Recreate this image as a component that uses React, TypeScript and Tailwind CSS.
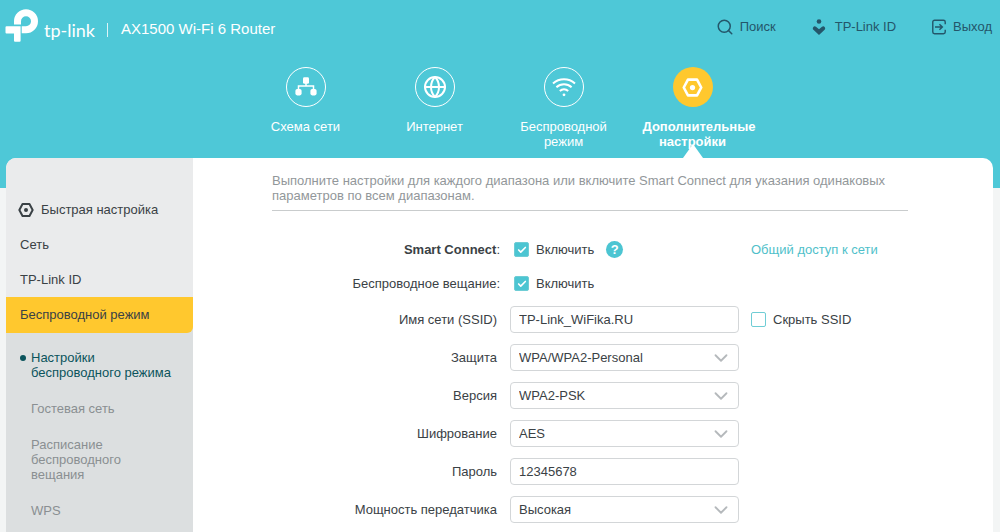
import type { ReactNode } from 'react'
import { Check, ChevronDown, Globe, Search } from 'lucide-react'

function Logo() {
  return (
    <svg className="mb-2 h-[34px] w-[34px] shrink-0" viewBox="0 0 34 34" fill="none" aria-hidden="true">
      <path d="M12.500 15.600V12.300a8.500 8.500 0 1 1 8.500 8.500h-4.300" stroke="white" strokeWidth="7" />
      <path d="M1.500 17.300H15.600V31.800a1 1 0 0 1-1 1H10a1 1 0 0 1-1-1V24.500H1.500a1 1 0 0 1-1-1V18.300a1 1 0 0 1 1-1z" fill="white" />
    </svg>
  )
}

function TopologyIcon() {
  return (
    <svg className="h-6 w-6" viewBox="0 0 24 24" fill="none" aria-hidden="true">
      <rect x="9" y="2.2" width="6" height="6.6" rx="1.4" fill="currentColor" />
      <rect x="1.4" y="14" width="6.2" height="6.4" rx="1.8" fill="currentColor" />
      <rect x="16.4" y="14" width="6.2" height="6.4" rx="1.8" fill="currentColor" />
      <path d="M12 8v3M4.500 15v-4h15v4" stroke="currentColor" strokeWidth="1.5" />
    </svg>
  )
}

function WifiIcon() {
  return (
    <svg className="h-6 w-6" viewBox="0 0 24 24" fill="none" stroke="currentColor" strokeWidth="2" aria-hidden="true">
      <path d="M1 8.400a16.500 16.500 0 0 1 22 0" />
      <path d="M4.400 12.200a11.400 11.400 0 0 1 15.200 0" />
      <path d="M7.800 15.900a6.500 6.500 0 0 1 8.400 0" />
      <circle cx="12" cy="19.800" r="1.400" fill="currentColor" stroke="none" />
    </svg>
  )
}

function GearIcon({ className }: { className: string }) {
  return (
    <svg className={className} viewBox="0 0 24 24" fill="none" stroke="currentColor" strokeWidth="3" aria-hidden="true">
      <path d="M6.800 3h10.400L22 12l-4.800 9H6.800L2 12z" strokeLinejoin="round" />
      <circle cx="12" cy="12" r="3" fill="currentColor" stroke="none" />
    </svg>
  )
}

function CloudIdIcon() {
  return (
    <svg className="h-5 w-4" viewBox="0 0 16 20" fill="currentColor" aria-hidden="true">
      <circle cx="8" cy="4.500" r="2.300" />
      <path d="M2.200 10.200a2 2 0 0 1 2.800-.4L8 12.200l3-2.400a2 2 0 0 1 2.800.4c.6.8.5 1.800-.2 2.500L8 18l-5.600-5.300c-.7-.7-.8-1.700-.2-2.500z" />
    </svg>
  )
}

function LogoutIcon() {
  return (
    <svg className="h-4 w-4" viewBox="0 0 18 18" fill="none" stroke="currentColor" strokeWidth="1.600" aria-hidden="true">
      <path d="M16 6V3.500a2 2 0 0 0-2-2H4a2 2 0 0 0-2 2v11a2 2 0 0 0 2 2h10a2 2 0 0 0 2-2V12" />
      <path d="M4.500 9h8M9.500 5.800 12.800 9 9.500 12.200" />
    </svg>
  )
}

const tabs = [
  { label: 'Схема сети', icon: <TopologyIcon /> },
  { label: 'Интернет', icon: <Globe className="h-6 w-6" strokeWidth={2} /> },
  { label: 'Беспроводной режим', icon: <WifiIcon /> },
  { label: 'Дополнительные настройки', icon: <GearIcon className="h-[21px] w-[21px]" />, active: true },
]

const subItems = ['Настройки беспроводного режима', 'Гостевая сеть', 'Расписание беспроводного вещания', 'WPS']

function Header() {
  return (
    <header className="bg-[#4ec8d7] pb-[30px] text-white">
      <div className="flex h-[59px] items-center justify-between pr-2 pl-[5px]">
        <div className="flex items-center">
          <Logo />
          <span className="ml-[5px] font-[Lato] text-[18px] leading-6">tp-link</span>
          <span className="ml-3 h-[14px] w-px bg-white/80" />
          <h1 className="ml-[13px] text-[15px]">AX1500 Wi-Fi 6 Router</h1>
        </div>
        <nav className="mt-[-5px] flex items-center gap-[35px] text-[13px] text-[#24566a]">
          <button type="button" className="flex items-center gap-1.5">
            <Search className="h-[18px] w-[18px]" />
            Поиск
          </button>
          <button type="button" className="flex items-center gap-2">
            <CloudIdIcon />
            TP-Link ID
          </button>
          <button type="button" className="flex items-center gap-1.5">
            <LogoutIcon />
            Выход
          </button>
        </nav>
      </div>
      <nav className="flex h-[99px] justify-center pt-2 pr-[2px]">
        {tabs.map((tab) => (
          <a key={tab.label} href="#" className="relative flex w-[129px] flex-col items-center text-center">
            <span
              className={`flex h-10 w-10 shrink-0 items-center justify-center rounded-full ${
                tab.active ? 'bg-[#ffc82e]' : 'border border-white'
              }`}
            >
              {tab.icon}
            </span>
            <span className={`mt-3 w-[100px] text-[13px] leading-[15px] ${tab.active ? 'font-bold' : ''}`}>{tab.label}</span>
            {tab.active && (
              <span className="absolute bottom-0 h-0 w-0 border-x-[10px] border-b-[14px] border-x-transparent border-b-white" />
            )}
          </a>
        ))}
      </nav>
    </header>
  )
}

function Sidebar() {
  return (
    <aside className="flex w-[187px] shrink-0 flex-col bg-[#eaebec] pt-[34px]">
      <a href="#" className="flex h-[35px] items-center gap-[7px] pl-3">
        <GearIcon className="h-4 w-4" />
        Быстрая настройка
      </a>
      <a href="#" className="flex h-[35px] items-center pl-[14px]">
        Сеть
      </a>
      <a href="#" className="flex h-[35px] items-center pl-[14px]">
        TP-Link ID
      </a>
      <div className="flex flex-1 flex-col bg-[#dcdfe0]">
        <a href="#" className="flex h-9 items-center rounded-br-md bg-[#ffc82e] pl-[14px]">
          Беспроводной режим
        </a>
        <ul className="flex flex-col gap-[21px] pt-[17px] pr-5 pl-[14px] leading-[15px] text-[#8a8f92]">
          {subItems.map((item, i) => (
            <li key={item}>
              <a href="#" className={`flex gap-[5px] ${i === 0 ? 'text-[#0b545c]' : ''}`}>
                <span className={`mt-[5px] h-1.5 w-1.5 shrink-0 rounded-full ${i === 0 ? 'bg-[#0b545c]' : ''}`} />
                {item}
              </a>
            </li>
          ))}
        </ul>
      </div>
    </aside>
  )
}

function Checkbox({ id, label, checked }: { id: string; label: string; checked?: boolean }) {
  return (
    <label htmlFor={id} className="flex items-center gap-[7px]">
      <span className="relative flex h-[15px] w-[15px]">
        <input
          id={id}
          type="checkbox"
          defaultChecked={checked}
          className="peer h-[15px] w-[15px] appearance-none rounded-xs border border-[#6fcdd5] checked:bg-[#4cc5d2]"
        />
        <Check className="pointer-events-none absolute inset-0 m-auto hidden h-2.5 w-2.5 text-white peer-checked:block" strokeWidth={4} />
      </span>
      {label}
    </label>
  )
}

function Row({ label, htmlFor, bold, colon, children }: { label: string; htmlFor: string; bold?: boolean; colon?: boolean; children: ReactNode }) {
  return (
    <div className={`grid grid-cols-[228px_229px_1fr] items-center gap-x-[10px] ${colon ? 'h-[23px]' : 'h-[27px]'}`}>
      <label htmlFor={htmlFor} className={`text-right ${colon ? '' : 'pr-[3px]'}`}>
        <span className={bold ? 'font-bold' : ''}>{label}</span>
        {colon && ':'}
      </label>
      {children}
    </div>
  )
}

function TextField({ id, value }: { id: string; value: string }) {
  return <input id={id} type="text" defaultValue={value} className="h-[27px] w-full rounded border border-[#d3d6d8] bg-white px-2" />
}

function SelectField({ id, value }: { id: string; value: string }) {
  return (
    <div className="relative">
      <select id={id} className="block h-[27px] w-full appearance-none rounded border border-[#d3d6d8] bg-white px-2">
        <option>{value}</option>
      </select>
      <ChevronDown className="pointer-events-none absolute top-[3px] right-[7px] h-[22px] w-[22px] text-[#b5b9bc]" />
    </div>
  )
}

export default function App() {
  return (
    <div className="flex min-h-screen flex-col bg-[#f3f5f5] font-['Liberation_Sans',Arial,sans-serif] text-[13px] text-[#3a4145]">
      <Header />
      <div className="mt-[-30px] mr-[7px] ml-1.5 flex flex-1 overflow-hidden rounded-t-[10px] bg-white">
        <Sidebar />
        <main className="flex-1 pt-[15px] pr-[85px] pl-[79px]">
          <p className="border-b border-[#c9cccd] pb-[7px] leading-[15px] text-[#92979a]">
            Выполните настройки для каждого диапазона или включите Smart Connect для указания одинаковых параметров по всем диапазонам.
          </p>
          <form className="mt-[27px] flex flex-col gap-[11px]">
            <Row label="Smart Connect" htmlFor="smart" bold colon>
              <div className="flex items-center gap-3 pl-1">
                <Checkbox id="smart" label="Включить" checked />
                <button type="button" className="h-[17px] w-[17px] rounded-full bg-[#4cc5d2] text-center leading-[17px] font-bold text-white">
                  ?
                </button>
              </div>
              <a href="#" className="pl-[2px] text-[#4fbfca]">
                Общий доступ к сети
              </a>
            </Row>
            <Row label="Беспроводное вещание" htmlFor="radio" colon>
              <div className="pl-1">
                <Checkbox id="radio" label="Включить" checked />
              </div>
            </Row>
            <Row label="Имя сети (SSID)" htmlFor="ssid">
              <TextField id="ssid" value="TP-Link_WiFika.RU" />
              <div className="pl-[2px]">
                <Checkbox id="hide" label="Скрыть SSID" />
              </div>
            </Row>
            <Row label="Защита" htmlFor="security">
              <SelectField id="security" value="WPA/WPA2-Personal" />
            </Row>
            <Row label="Версия" htmlFor="version">
              <SelectField id="version" value="WPA2-PSK" />
            </Row>
            <Row label="Шифрование" htmlFor="encryption">
              <SelectField id="encryption" value="AES" />
            </Row>
            <Row label="Пароль" htmlFor="password">
              <TextField id="password" value="12345678" />
            </Row>
            <Row label="Мощность передатчика" htmlFor="power">
              <SelectField id="power" value="Высокая" />
            </Row>
          </form>
        </main>
      </div>
    </div>
  )
}
